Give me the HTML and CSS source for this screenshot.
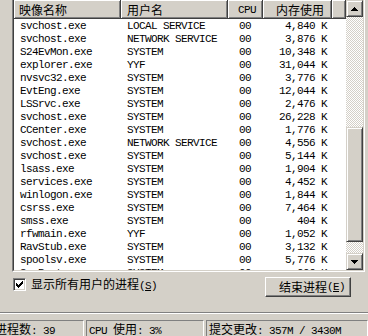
FILE: index.html
```html
<!DOCTYPE html>
<html>
<head>
<meta charset="utf-8">
<link rel="stylesheet" href="styles.css">
</head>
<body>
<div class="list">
  <div class="list-in">
    <div class="main">
      <div class="hdr">
        <div class="hc h-name"><span class="cjk">映像名称</span></div>
        <div class="hc h-user"><span class="cjk">用户名</span></div>
        <div class="hc h-cpu">CPU</div>
        <div class="hc h-mem"><span class="cjk">内存使用</span></div>
        <div class="hc h-fill"></div>
      </div>
      <div class="row"><span class="c-name">svchost.exe</span><span class="c-user">LOCAL SERVICE</span><span class="c-cpu">00</span><span class="c-mem">4,840 K</span></div>
      <div class="row"><span class="c-name">svchost.exe</span><span class="c-user">NETWORK SERVICE</span><span class="c-cpu">00</span><span class="c-mem">3,876 K</span></div>
      <div class="row"><span class="c-name">S24EvMon.exe</span><span class="c-user">SYSTEM</span><span class="c-cpu">00</span><span class="c-mem">10,348 K</span></div>
      <div class="row"><span class="c-name">explorer.exe</span><span class="c-user">YYF</span><span class="c-cpu">00</span><span class="c-mem">31,044 K</span></div>
      <div class="row"><span class="c-name">nvsvc32.exe</span><span class="c-user">SYSTEM</span><span class="c-cpu">00</span><span class="c-mem">3,776 K</span></div>
      <div class="row"><span class="c-name">EvtEng.exe</span><span class="c-user">SYSTEM</span><span class="c-cpu">00</span><span class="c-mem">12,044 K</span></div>
      <div class="row"><span class="c-name">LSSrvc.exe</span><span class="c-user">SYSTEM</span><span class="c-cpu">00</span><span class="c-mem">2,476 K</span></div>
      <div class="row"><span class="c-name">svchost.exe</span><span class="c-user">SYSTEM</span><span class="c-cpu">00</span><span class="c-mem">26,228 K</span></div>
      <div class="row"><span class="c-name">CCenter.exe</span><span class="c-user">SYSTEM</span><span class="c-cpu">00</span><span class="c-mem">1,776 K</span></div>
      <div class="row"><span class="c-name">svchost.exe</span><span class="c-user">NETWORK SERVICE</span><span class="c-cpu">00</span><span class="c-mem">4,556 K</span></div>
      <div class="row"><span class="c-name">svchost.exe</span><span class="c-user">SYSTEM</span><span class="c-cpu">00</span><span class="c-mem">5,144 K</span></div>
      <div class="row"><span class="c-name">lsass.exe</span><span class="c-user">SYSTEM</span><span class="c-cpu">00</span><span class="c-mem">1,904 K</span></div>
      <div class="row"><span class="c-name">services.exe</span><span class="c-user">SYSTEM</span><span class="c-cpu">00</span><span class="c-mem">4,452 K</span></div>
      <div class="row"><span class="c-name">winlogon.exe</span><span class="c-user">SYSTEM</span><span class="c-cpu">00</span><span class="c-mem">1,844 K</span></div>
      <div class="row"><span class="c-name">csrss.exe</span><span class="c-user">SYSTEM</span><span class="c-cpu">00</span><span class="c-mem">7,464 K</span></div>
      <div class="row"><span class="c-name">smss.exe</span><span class="c-user">SYSTEM</span><span class="c-cpu">00</span><span class="c-mem">404 K</span></div>
      <div class="row"><span class="c-name">rfwmain.exe</span><span class="c-user">YYF</span><span class="c-cpu">00</span><span class="c-mem">1,052 K</span></div>
      <div class="row"><span class="c-name">RavStub.exe</span><span class="c-user">SYSTEM</span><span class="c-cpu">00</span><span class="c-mem">3,132 K</span></div>
      <div class="row"><span class="c-name">spoolsv.exe</span><span class="c-user">SYSTEM</span><span class="c-cpu">00</span><span class="c-mem">5,776 K</span></div>
      <div class="row"><span class="c-name">SeaPort.exe</span><span class="c-user">SYSTEM</span><span class="c-cpu">00</span><span class="c-mem">996 K</span></div>
    </div>
    <div class="vs">
      <div class="sb"><svg width="7" height="4" viewBox="0 0 7 4"><path d="M3 0h1v1h-1z M2 1h3v1h-3z M1 2h5v1h-5z M0 3h7v1h-7z" fill="#000"/></svg></div>
      <div class="track"><div class="thumb"></div></div>
      <div class="sb"><svg width="7" height="4" viewBox="0 0 7 4"><path d="M0 0h7v1h-7z M1 1h5v1h-5z M2 2h3v1h-3z M3 3h1v1h-1z" fill="#000"/></svg></div>
    </div>
  </div>
</div>
<div class="opts">
  <div class="chk-wrap">
    <div class="chk"><svg width="7" height="7" viewBox="0 0 7 7"><path d="M6 0h1v1h-1z M5 1h2v1h-2z M0 2h1v1h-1z M4 2h3v1h-3z M0 3h2v1h-2z M3 3h3v1h-3z M0 4h5v1h-5z M1 5h3v1h-3z M2 6h1v1h-1z" fill="#000"/></svg></div>
    <div class="lbl"><span class="cjk">显示所有用户的进程</span>(<u>S</u>)</div>
  </div>
  <div class="btn"><span class="cjk">结束进程</span>(<u>E</u>)</div>
</div>
<div class="sep"></div>
<div class="status">
  <div class="panel p1"><span class="cjk">进程数</span>: 39</div>
  <div class="panel p2">CPU <span class="cjk">使用</span>: 3%</div>
  <div class="panel p3"><span class="cjk">提交更改</span>: 357M / 3430M</div>
</div>
</body>
</html>
```
FILE: styles.css
```css
* { box-sizing: border-box; margin: 0; padding: 0; }
html, body { width: 368px; height: 336px; overflow: hidden; background: #d4d0c8; }
body {
  font-family: "Liberation Mono", "Noto Sans CJK SC", monospace;
  font-size: 11px;
  letter-spacing: -0.6px;
  color: #000;
}
.cjk { font-family: "Noto Sans CJK SC", sans-serif; font-size: 12px; letter-spacing: 0; }

.list {
  margin: -2px 0 0 12px;
  width: 353px;
  height: 274px;
  border: 1px solid;
  border-color: #808080 #fff #fff #808080;
}
.list-in {
  height: 272px;
  border: 1px solid;
  border-color: #404040 #d4d0c8 #d4d0c8 #404040;
  display: flex;
}
.main { width: 332px; height: 270px; background: #fff; overflow: hidden; }

.hdr { display: flex; height: 19px; line-height: 16px; }
.hc {
  height: 19px;
  background: #d4d0c8;
  border-right: 1px solid #404040;
  border-bottom: 1px solid #404040;
  box-shadow: inset 1px 1px #fff, inset -1px -1px #808080;
  padding-top: 2px;
  white-space: nowrap;
  overflow: hidden;
}
.h-name { width: 107px; padding-left: 5px; }
.h-user { width: 107px; padding-left: 6px; }
.h-cpu { width: 35px; padding-left: 10px; }
.h-mem { width: 69px; text-align: right; padding-right: 7px; }
.h-fill { width: 14px; }

.row { display: flex; height: 13px; line-height: 14px; white-space: nowrap; }
.row span { display: block; overflow: hidden; }
.c-name { width: 107px; padding-left: 6px; }
.c-user { width: 107px; padding-left: 6px; }
.c-cpu { width: 35px; padding-left: 11px; }
.c-mem { width: 69px; text-align: right; padding-right: 5px; }

.vs { width: 17px; height: 270px; display: flex; flex-direction: column; }
.sb, .thumb {
  background: #d4d0c8;
  border: 1px solid;
  border-color: #d4d0c8 #404040 #404040 #d4d0c8;
  box-shadow: inset 1px 1px #fff, inset -1px -1px #808080;
}
.sb { height: 17px; display: flex; align-items: center; justify-content: center; }
.sb svg { display: block; }
.track {
  flex: 1;
  background: repeating-conic-gradient(#d4d0c8 0 25%, #fff 0 50%) 0 0 / 2px 2px;
  padding-top: 110px;
}
.thumb { height: 115px; }

.opts {
  height: 40px;
  display: flex;
  justify-content: space-between;
  align-items: flex-start;
  padding: 0 17px 0 13px;
}
.chk-wrap { display: flex; margin-top: 4px; line-height: 16px; }
.chk {
  margin-top: 2px;
  width: 13px;
  height: 13px;
  border: 1px solid;
  border-color: #808080 #fff #fff #808080;
  box-shadow: inset 1px 1px #404040, inset -1px -1px #d4d0c8;
  background: #fff;
  display: flex;
  align-items: center;
  justify-content: center;
}
.chk svg { display: block; }
.lbl { margin-left: 5px; white-space: nowrap; }
.btn {
  margin-top: 5px;
  width: 86px;
  height: 20px;
  border: 1px solid;
  border-color: #fff #404040 #404040 #fff;
  box-shadow: inset -1px -1px #808080;
  display: flex;
  align-items: center;
  justify-content: center;
  padding-left: 8px;
  line-height: 16px;
  white-space: nowrap;
}

.sep { height: 2px; border-top: 1px solid #808080; border-bottom: 1px solid #fff; }

.status { display: flex; gap: 2px; margin: 6px 0 0 -8px; height: 22px; }
.panel {
  border: 1px solid;
  border-color: #808080 #fff #fff #808080;
  padding-left: 2px;
  line-height: 16px;
  white-space: nowrap;
  overflow: hidden;
}
.p1 { width: 92px; flex: none; }
.p2 { width: 118px; flex: none; }
.p3 { flex: 1; }
```
